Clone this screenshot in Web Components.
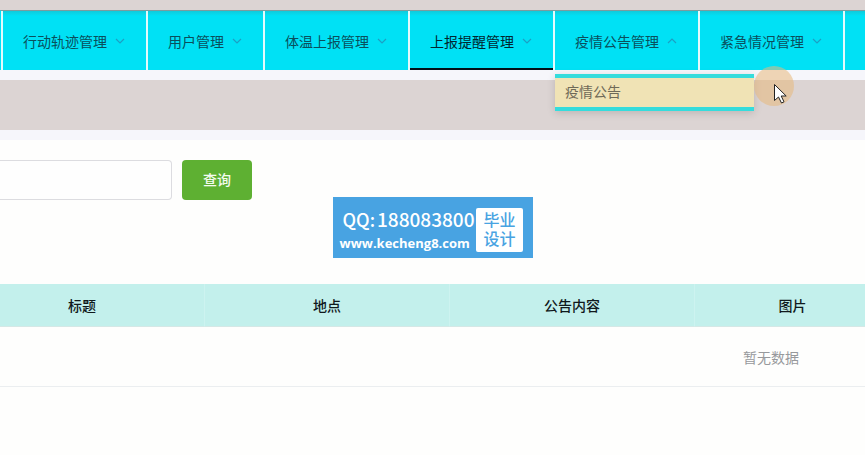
<!DOCTYPE html>
<html lang="zh-CN">
<head>
  <meta charset="UTF-8">
  <meta name="viewport" content="width=device-width, initial-scale=1.0">
  <title>疫情公告管理</title>
  <style>
    body {
      margin: 0;
      min-height: 100vh;
      overflow-x: hidden;
      background-color: #fefefd;
      font-family: "Liberation Sans", "Noto Sans CJK SC", sans-serif;
      font-size: 14px;
    }
  </style>
</head>
<body>
  <top-nav>
    <nav-item>行动轨迹管理</nav-item>
    <nav-item>用户管理</nav-item>
    <nav-item>体温上报管理</nav-item>
    <nav-item active>上报提醒管理</nav-item>
    <nav-item open>疫情公告管理<a slot="menu" href="#notice">疫情公告</a></nav-item>
    <nav-item>紧急情况管理</nav-item>
  </top-nav>
  <page-banner></page-banner>
  <main>
    <search-bar></search-bar>
    <notice-table></notice-table>
  </main>
  <contact-badge></contact-badge>
  <pointer-mark></pointer-mark>

  <script>
    class TopNav extends HTMLElement {
      constructor() {
        super();
        this.attachShadow({ mode: "open" });
        this.shadowRoot.innerHTML = `
          <style>
            :host {
              display: block;
              border-top: 10px solid #dcd4d3;
            }
            nav {
              display: flex;
              height: 60px;
              box-sizing: border-box;
              border-top: 1px solid #7b9c9e;
              border-left: 1px solid #00e1f5;
            }
            .rest {
              flex: 1;
              border-left: 2px solid #e4fafc;
              background: linear-gradient(#10cbdc, #00e1f5 5px);
            }
          </style>
          <nav>
            <slot></slot>
            <div class="rest"></div>
          </nav>
        `;
      }
    }

    class NavItem extends HTMLElement {
      constructor() {
        super();
        this.attachShadow({ mode: "open" });
        this.shadowRoot.innerHTML = `
          <style>
            :host {
              display: block;
              position: relative;
              flex: none;
              border-left: 2px solid #e4fafc;
            }
            button {
              display: flex;
              align-items: center;
              gap: 7px;
              width: 100%;
              height: 100%;
              padding: 0 20px;
              border: none;
              background: linear-gradient(#10cbdc, #00e1f5 5px);
              color: #0a4f5c;
              font: inherit;
              white-space: nowrap;
              cursor: pointer;
            }
            :host([active]) button {
              box-shadow: inset 0 -2px #001018;
              color: #01262f;
            }
            svg {
              width: 12px;
              height: 12px;
              fill: none;
              stroke: #1ba0c4;
              stroke-width: 1.2;
            }
            :host([open]) svg {
              transform: rotate(180deg);
            }
            .menu {
              display: none;
              position: absolute;
              top: calc(100% + 4px);
              left: 0;
              z-index: 2;
              width: 199px;
              border-top: 4px solid #35dcdc;
              border-bottom: 4px solid #35dcdc;
              box-shadow: 0 2px 8px rgba(0, 0, 0, 0.15);
            }
            :host([open]) .menu {
              display: block;
            }
            ::slotted(a) {
              display: block;
              padding: 0 10px;
              background-color: #f0e3b5;
              color: #6f6a58;
              line-height: 29px;
              text-decoration: none;
            }
          </style>
          <button type="button">
            <span><slot></slot></span>
            <svg viewBox="0 0 12 12"><path d="M2 4l4 4 4-4"/></svg>
          </button>
          <div class="menu"><slot name="menu"></slot></div>
        `;
      }

      connectedCallback() {
        if (!this.querySelector("[slot=menu]")) return;
        this.shadowRoot.querySelector("button").addEventListener("click", () => {
          this.toggleAttribute("open");
        });
      }
    }

    class PageBanner extends HTMLElement {
      constructor() {
        super();
        this.attachShadow({ mode: "open" });
        this.shadowRoot.innerHTML = `
          <style>
            :host {
              display: block;
              padding: 10px 0;
              background-color: #f6f6fb;
            }
            div {
              height: 50px;
              background-color: #dcd4d3;
            }
          </style>
          <div></div>
        `;
      }
    }

    class SearchBar extends HTMLElement {
      constructor() {
        super();
        this.attachShadow({ mode: "open" });
        this.shadowRoot.innerHTML = `
          <style>
            :host {
              display: block;
              padding: 20px 0 84px;
            }
            form {
              display: flex;
              gap: 10px;
            }
            input {
              width: 172px;
              height: 40px;
              padding: 0 15px;
              box-sizing: border-box;
              border: 1px solid #dcdce0;
              border-left: none;
              border-radius: 0 4px 4px 0;
              background-color: #fefefe;
              color: #606266;
              font: inherit;
              outline: none;
            }
            button {
              height: 40px;
              padding: 0 21px 2px;
              border: none;
              border-radius: 4px;
              background-color: #5eb032;
              color: #f4fbef;
              font: inherit;
              font-weight: 500;
              cursor: pointer;
            }
          </style>
          <form>
            <input type="text" aria-label="标题">
            <button type="submit">查询</button>
          </form>
        `;
      }

      connectedCallback() {
        this.shadowRoot.querySelector("form").addEventListener("submit", (e) => {
          e.preventDefault();
        });
      }
    }

    class NoticeTable extends HTMLElement {
      constructor() {
        super();
        this.attachShadow({ mode: "open" });
        this.shadowRoot.innerHTML = `
          <style>
            :host {
              display: block;
              overflow: hidden;
            }
            table {
              width: 1622px;
              margin-left: -40px;
              table-layout: fixed;
              border-collapse: separate;
              border-spacing: 0;
            }
            .wide {
              width: 245px;
            }
            .narrow {
              width: 196px;
            }
            th {
              height: 42px;
              padding: 0;
              border-right: 1px solid #cdf3f0;
              border-bottom: 1px solid #d5e8e6;
              background-color: #c3f0ec;
              color: #10191c;
              font-weight: 500;
            }
            td {
              height: 59px;
              padding: 0;
              border-bottom: 1px solid #ebeef0;
              color: #97999c;
              text-align: center;
            }
          </style>
          <table>
            <colgroup>
              <col class="wide"><col class="wide"><col class="wide"><col class="narrow"><col>
            </colgroup>
            <thead>
              <tr><th>标题</th><th>地点</th><th>公告内容</th><th>图片</th><th></th></tr>
            </thead>
            <tbody>
              <tr><td colspan="5">暂无数据</td></tr>
            </tbody>
          </table>
        `;
      }
    }

    class ContactBadge extends HTMLElement {
      constructor() {
        super();
        this.attachShadow({ mode: "open" });
        this.shadowRoot.innerHTML = `
          <style>
            :host {
              display: flex;
              position: fixed;
              inset: 0;
              z-index: 3;
              align-items: center;
              justify-content: space-between;
              box-sizing: border-box;
              width: 200px;
              height: 61px;
              margin: auto;
              padding: 5px 10px 0 7px;
              background-color: #48a3e2;
              color: #fff;
              white-space: nowrap;
            }
            .lines {
              display: flex;
              flex-direction: column;
            }
            .qq {
              display: flex;
              align-items: baseline;
              gap: 2px;
              padding-left: 3px;
              font-family: "Noto Sans CJK SC", sans-serif;
              font-size: 18px;
              font-weight: 500;
              line-height: 26px;
            }
            .qq b {
              font-size: 19px;
              font-weight: 500;
            }
            .site {
              color: inherit;
              font-family: "Open Sans", sans-serif;
              font-size: 13px;
              font-weight: 700;
              line-height: 22px;
              text-decoration: none;
            }
            .tag {
              padding: 3px 7px;
              border-radius: 2px;
              background-color: #fff;
              color: #48a3e2;
              font-size: 16px;
              font-weight: 500;
              line-height: 19px;
            }
            .tag span {
              display: block;
            }
          </style>
          <div class="lines">
            <div class="qq"><span>QQ:</span><b>188083800</b></div>
            <a class="site" href="#site">www.kecheng8.com</a>
          </div>
          <div class="tag"><span>毕业</span><span>设计</span></div>
        `;
      }
    }

    // highlighted mouse pointer next to the open menu
    class PointerMark extends HTMLElement {
      constructor() {
        super();
        this.attachShadow({ mode: "open" });
        this.shadowRoot.innerHTML = `
          <style>
            :host {
              display: block;
              position: absolute;
              top: 66px;
              left: 754px;
              z-index: 4;
              pointer-events: none;
            }
            svg {
              display: block;
            }
          </style>
          <svg width="40" height="40" viewBox="0 0 40 40">
            <circle cx="20" cy="20" r="20" fill="#e8b87c" fill-opacity=".55"/>
            <path d="M20.500 18.500v16l4-3.500 3 6 2.500-1.200-2.800-5.800h5z" fill="#fff" stroke="#222" stroke-linejoin="round"/>
          </svg>
        `;
      }
    }

    customElements.define("top-nav", TopNav);
    customElements.define("nav-item", NavItem);
    customElements.define("page-banner", PageBanner);
    customElements.define("search-bar", SearchBar);
    customElements.define("notice-table", NoticeTable);
    customElements.define("contact-badge", ContactBadge);
    customElements.define("pointer-mark", PointerMark);
  </script>
</body>
</html>
